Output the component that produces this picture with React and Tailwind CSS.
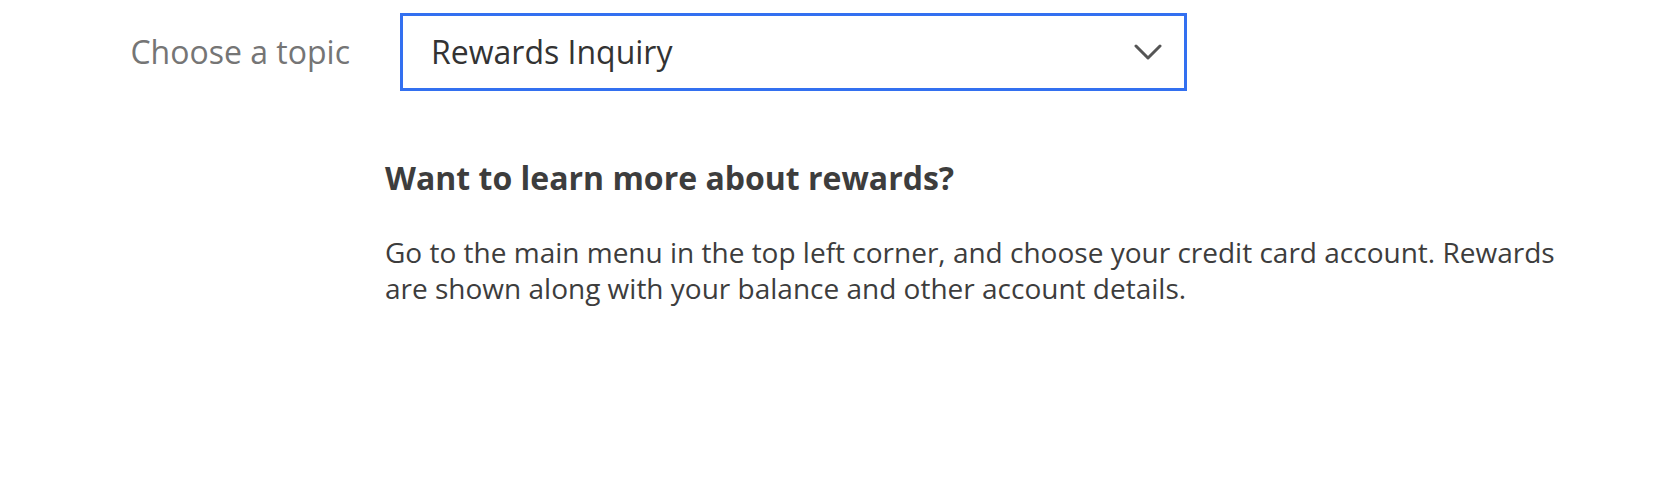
import React from "react";

/* ── Chevron for the select ── */
const Chevron = () => (
  <svg width="28" height="18" viewBox="0 0 28 18" fill="none">
    <path d="M2 3 L14 15 L26 3" stroke="#555555" strokeWidth="3" strokeLinecap="round" strokeLinejoin="round" />
  </svg>
);

export default function App() {
  return (
    <div className="w-[1654px] h-[482px] bg-white font-['Open_Sans',sans-serif]">
      {/* ── Topic row ── */}
      <div className="flex items-center pt-[13px]">
        <label className="w-[400px] pr-[50px] text-right text-[32px] text-[#757575]">
          Choose a topic
        </label>
        <div className="w-[787px] h-[78px] border-[3px] border-[#3370f0] flex items-center justify-between pl-[28px] pr-[22px]">
          <span className="text-[32px] text-[#333333]">Rewards Inquiry</span>
          <Chevron />
        </div>
      </div>

      {/* ── Answer ── */}
      <div className="pl-[385px] pt-[67px] text-[#3d3d3d]">
        <h2 className="text-[32px] font-bold leading-[40px]">
          Want to learn more about rewards?
        </h2>
        <p className="mt-[36px] w-[1190px] text-[28px] leading-[36px]">
          Go to the main menu in the top left corner, and choose your credit card account. Rewards
          are shown along with your balance and other account details.
        </p>
      </div>
    </div>
  );
}
